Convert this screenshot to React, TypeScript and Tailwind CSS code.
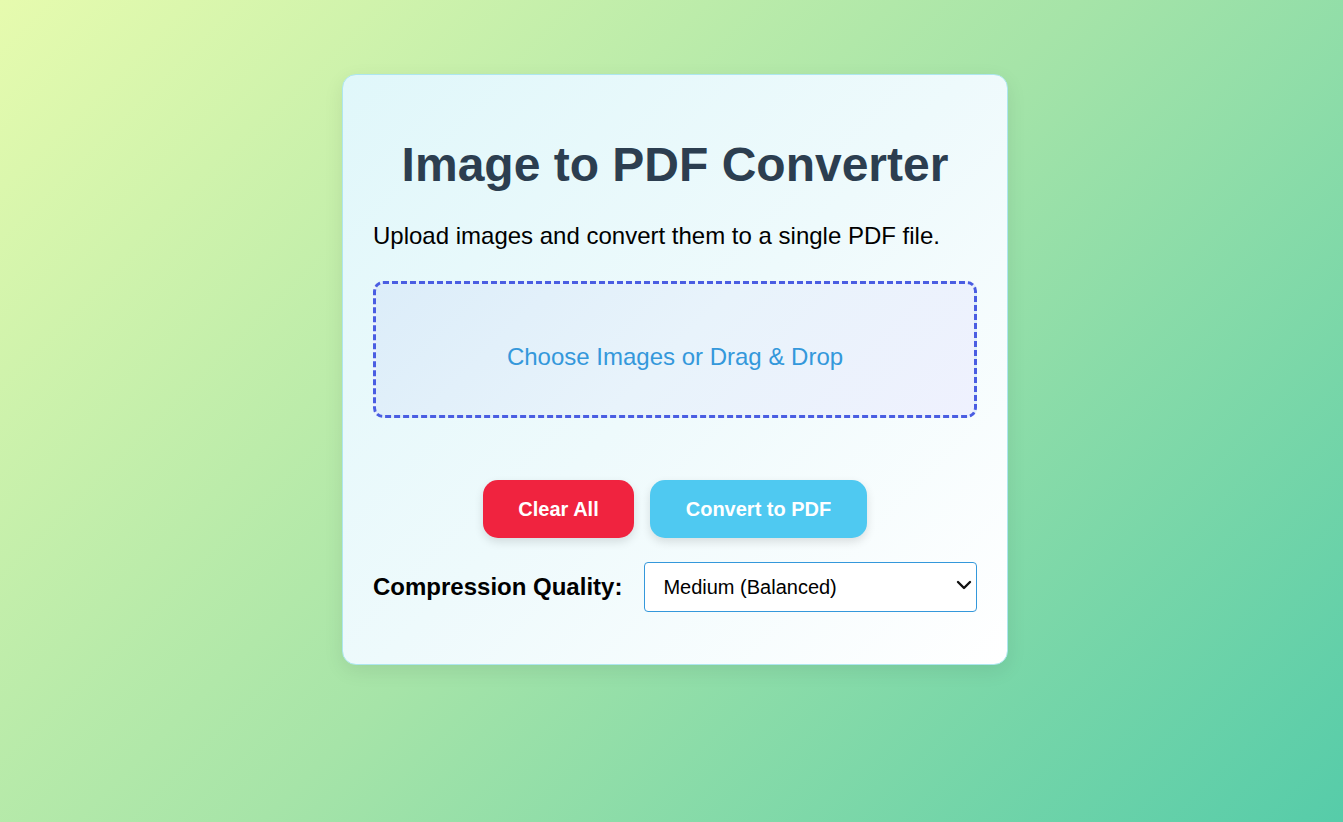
import React, { useState } from 'react';

const App: React.FC = () => {
  const [quality, setQuality] = useState('medium');

  return (
    <div className="min-h-screen w-full bg-[linear-gradient(135deg,#e6fbae_0%,#a6e4a8_50%,#56cca9_100%)] font-['Liberation_Sans',Arial,sans-serif]">
      <div className="flex justify-center pt-[74px] pl-[7px]">
        <div className="w-[666px] rounded-[14px] border border-[#ade6ef] bg-[linear-gradient(135deg,#e0f7fa_0%,#eefafc_50%,#ffffff_100%)] px-[30px] pt-8 pb-[52px] shadow-[0_6px_20px_rgba(0,0,0,0.08)]">
          <h1 className="mt-[30px] text-center text-[48px] font-bold leading-[55px] text-[#2c3e50]">
            Image to PDF Converter
          </h1>
          <p className="mt-[30px] text-[24px] leading-[28px] text-black">
            Upload images and convert them to a single PDF file.
          </p>

          <label className="mt-[31px] block h-[137px] cursor-pointer rounded-[10px] border-[3px] border-dashed border-[#4a5de2] bg-[linear-gradient(135deg,#dcedf9_0%,#e8f3fb_50%,#eff1fe_100%)] pt-[59px] text-center text-[24px] leading-[28px] text-[#3498db]">
            Choose Images or Drag &amp; Drop
            <input type="file" multiple accept="image/*" className="hidden" />
          </label>

          <div className="mt-[62px] flex justify-center gap-4">
            <button className="h-[58px] w-[151px] rounded-[15px] bg-[#f0233f] text-[20px] font-bold text-white shadow-[0_4px_10px_rgba(0,0,0,0.12)]">
              Clear All
            </button>
            <button className="h-[58px] w-[217px] rounded-[15px] bg-[#4fc9f1] text-[20px] font-bold text-white shadow-[0_4px_10px_rgba(0,0,0,0.12)]">
              Convert to PDF
            </button>
          </div>

          <div className="mt-[24px] flex items-center">
            <span className="text-[24px] font-bold text-black">Compression Quality:</span>
            <div className="relative ml-[22px] flex-1">
              <select
                value={quality}
                onChange={e => setQuality(e.target.value)}
                className="h-[50px] w-full appearance-none rounded-[4px] border border-[#3498db] bg-white pl-[18px] text-[20px] text-black outline-none"
              >
                <option value="high">High (Best Quality)</option>
                <option value="medium">Medium (Balanced)</option>
                <option value="low">Low (Smallest File)</option>
              </select>
              <svg
                className="pointer-events-none absolute right-[5px] top-[18px]"
                width="16"
                height="10"
                viewBox="0 0 16 10"
                fill="none"
              >
                <path d="M2 2l6 6 6-6" stroke="#111" strokeWidth="2.4" strokeLinecap="round" strokeLinejoin="round" />
              </svg>
            </div>
          </div>
        </div>
      </div>
    </div>
  );
};

export default App;
